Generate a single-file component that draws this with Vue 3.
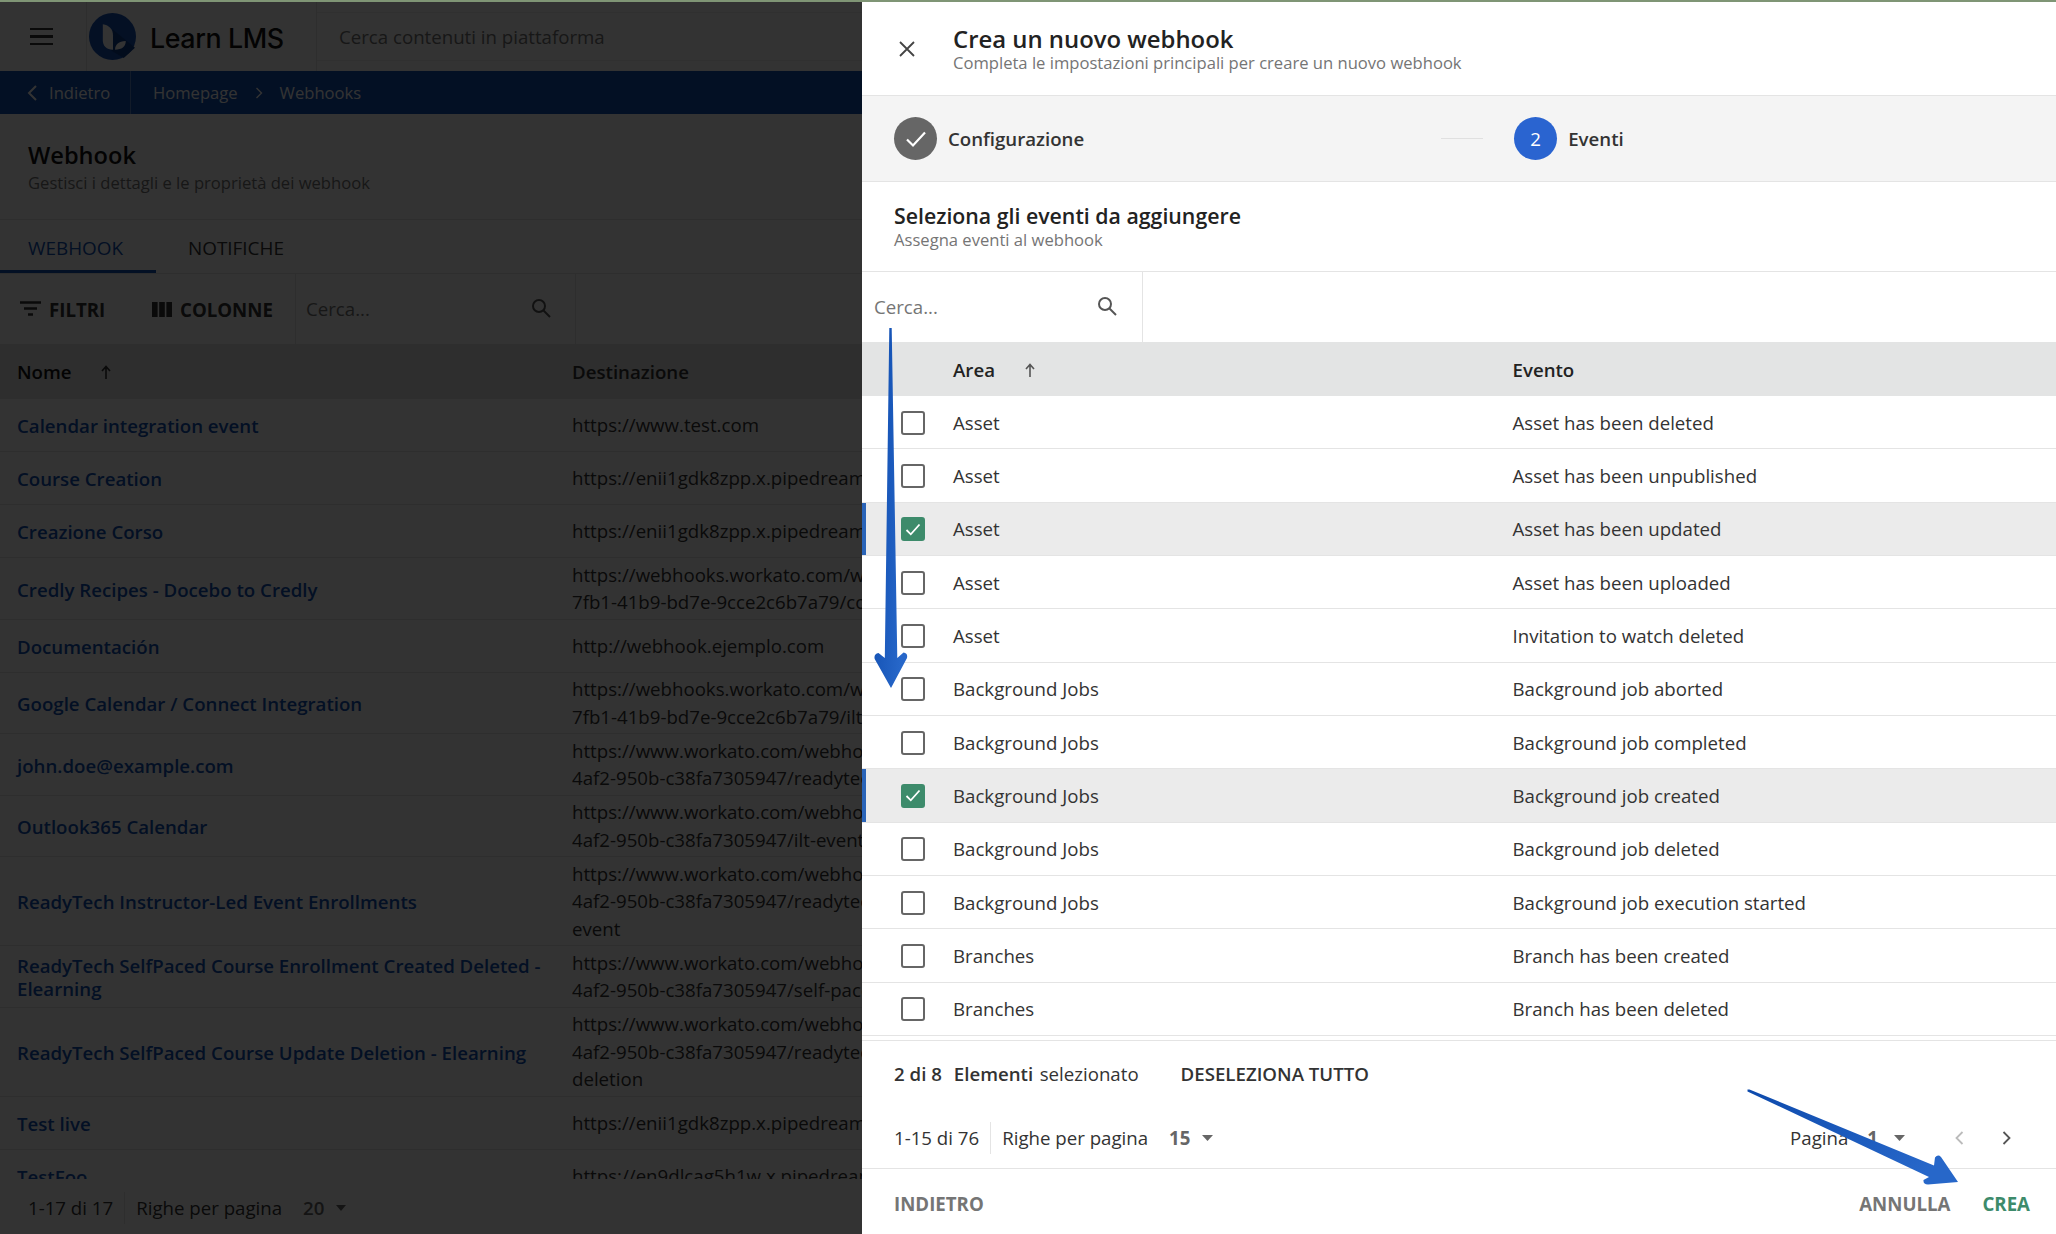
<script setup>
import { ref } from 'vue';

const hooks = [
  { name: ['Calendar integration event'], dest: ['https://www.test.com'] },
  { name: ['Course Creation'], dest: ['https://enii1gdk8zpp.x.pipedream.net'] },
  { name: ['Creazione Corso'], dest: ['https://enii1gdk8zpp.x.pipedream.net'] },
  { name: ['Credly Recipes - Docebo to Credly'], dest: ['https://webhooks.workato.com/webhooks/rest/', '7fb1-41b9-bd7e-9cce2c6b7a79/course'] },
  { name: ['Documentación'], dest: ['http://webhook.ejemplo.com'] },
  { name: ['Google Calendar / Connect Integration'], dest: ['https://webhooks.workato.com/webhooks/rest/', '7fb1-41b9-bd7e-9cce2c6b7a79/ilt-event'] },
  { name: ['john.doe@example.com'], dest: ['https://www.workato.com/webhooks/rest/', '4af2-950b-c38fa7305947/readytech'] },
  { name: ['Outlook365 Calendar'], dest: ['https://www.workato.com/webhooks/rest/', '4af2-950b-c38fa7305947/ilt-event'] },
  { name: ['ReadyTech Instructor-Led Event Enrollments'], dest: ['https://www.workato.com/webhooks/rest/', '4af2-950b-c38fa7305947/readytech', 'event'] },
  { name: ['ReadyTech SelfPaced Course Enrollment Created Deleted -', 'Elearning'], dest: ['https://www.workato.com/webhooks/rest/', '4af2-950b-c38fa7305947/self-paced'] },
  { name: ['ReadyTech SelfPaced Course Update Deletion - Elearning'], dest: ['https://www.workato.com/webhooks/rest/', '4af2-950b-c38fa7305947/readytech', 'deletion'] },
  { name: ['Test live'], dest: ['https://enii1gdk8zpp.x.pipedream.net'] },
  { name: ['TestFoo'], dest: ['https://en9dlcag5h1w.x.pipedream.net'] }
];

const events = ref([
  { area: 'Asset', event: 'Asset has been deleted', on: false },
  { area: 'Asset', event: 'Asset has been unpublished', on: false },
  { area: 'Asset', event: 'Asset has been updated', on: true },
  { area: 'Asset', event: 'Asset has been uploaded', on: false },
  { area: 'Asset', event: 'Invitation to watch deleted', on: false },
  { area: 'Background Jobs', event: 'Background job aborted', on: false },
  { area: 'Background Jobs', event: 'Background job completed', on: false },
  { area: 'Background Jobs', event: 'Background job created', on: true },
  { area: 'Background Jobs', event: 'Background job deleted', on: false },
  { area: 'Background Jobs', event: 'Background job execution started', on: false },
  { area: 'Branches', event: 'Branch has been created', on: false },
  { area: 'Branches', event: 'Branch has been deleted', on: false }
]);
</script>

<template>
  <div class="page">
    <div class="strip"></div>

    <!-- Barra principale -->
    <header class="topbar">
      <div class="burger"><span></span><span></span><span></span></div>
      <div class="brand">
        <svg width="47" height="47" viewBox="0 0 46 46">
          <circle cx="23" cy="23" r="23" fill="#1450b4" />
          <path d="M23 16 L45 34 L34 44 L22 37 Z" fill="#0d3c8c" />
          <path d="M13.5 11 C20 12 23.5 16 23.5 22 L23.5 36 C17 36 13.5 32 13.5 27 Z" fill="#fff" />
          <path d="M25.5 36 C25.5 31 29 28 36 27.5 C36 33 32 36 25.5 36 Z" fill="#fff" />
        </svg>
        <span class="brand-name">Learn LMS</span>
      </div>
      <div class="global-search">Cerca contenuti in piattaforma</div>
    </header>

    <!-- Breadcrumb -->
    <nav class="crumbs">
      <div class="back">
        <svg width="12" height="18" viewBox="0 0 12 18"><path d="M10 2 L3 9 L10 16" fill="none" stroke="#fff" stroke-width="2" /></svg>
        <span>Indietro</span>
      </div>
      <div class="trail">
        <span>Homepage</span>
        <svg width="8" height="12" viewBox="0 0 8 12"><path d="M1.5 1 L6.5 6 L1.5 11" fill="none" stroke="#fff" stroke-width="1.4" /></svg>
        <span>Webhooks</span>
      </div>
    </nav>

    <div class="title-block">
      <h1>Webhook</h1>
      <p>Gestisci i dettagli e le proprietà dei webhook</p>
    </div>

    <div class="tabs">
      <div class="tab active">WEBHOOK</div>
      <div class="tab">NOTIFICHE</div>
    </div>

    <div class="toolbar">
      <div class="tools">
        <svg width="21" height="16" viewBox="0 0 21 16"><path d="M0 1.5H21M4 7.5H17M8 13.5H13" stroke="#333" stroke-width="2.4" /></svg>
        <span class="tool-label filters">FILTRI</span>
        <svg width="20" height="15" viewBox="0 0 20 15"><path d="M0 0H5.6V15H0ZM7.2 0H12.8V15H7.2ZM14.4 0H20V15H14.4Z" fill="#333" /></svg>
        <span class="tool-label">COLONNE</span>
      </div>
      <div class="tool-search">
        <span>Cerca...</span>
        <svg width="22" height="22" viewBox="0 0 22 22"><circle cx="9" cy="9" r="6" fill="none" stroke="#555" stroke-width="2" /><path d="M13.5 13.5 L20 20" stroke="#555" stroke-width="2" /></svg>
      </div>
    </div>

    <div class="hooks-head">
      <div class="col-name">Nome
        <svg class="sort" width="10" height="14" viewBox="0 0 10 14"><path d="M5 14V2M1 6L5 1.5L9 6" fill="none" stroke="#333" stroke-width="1.6" /></svg>
      </div>
      <div class="col-dest">Destinazione</div>
    </div>
    <div class="hooks-body">
      <div v-for="hook in hooks" :key="hook.name[0]" class="hook-row">
        <div class="col-name link"><div v-for="line in hook.name" :key="line">{{ line }}</div></div>
        <div class="col-dest"><div v-for="line in hook.dest" :key="line">{{ line }}</div></div>
      </div>
    </div>
    <div class="hooks-foot">
      <span class="count">1-17 di 17</span>
      <span class="per-page">Righe per pagina</span>
      <span class="size">20</span>
      <svg width="10" height="6" viewBox="0 0 10 6"><path d="M0 0H10L5 6Z" fill="#666" /></svg>
    </div>
  </div>

  <div class="overlay"></div>

  <!-- Pannello laterale -->
  <aside class="drawer">
    <div class="drawer-head">
      <svg class="close" width="18" height="18" viewBox="0 0 18 18"><path d="M2 2L16 16M16 2L2 16" stroke="#444" stroke-width="1.8" /></svg>
      <div>
        <div class="drawer-title">Crea un nuovo webhook</div>
        <div class="drawer-sub">Completa le impostazioni principali per creare un nuovo webhook</div>
      </div>
    </div>

    <div class="stepper">
      <div class="step">
        <div class="dot done">
          <svg width="22" height="18" viewBox="0 0 22 18"><path d="M2 9.5L8 15.5L20 2.5" fill="none" stroke="#fff" stroke-width="2.2" /></svg>
        </div>
        <span>Configurazione</span>
      </div>
      <div class="step-line"></div>
      <div class="step">
        <div class="dot current">2</div>
        <span>Eventi</span>
      </div>
    </div>

    <div class="section">
      <div class="section-title">Seleziona gli eventi da aggiungere</div>
      <div class="section-sub">Assegna eventi al webhook</div>
    </div>

    <div class="event-search">
      <div class="search-box">
        <span>Cerca...</span>
        <svg width="22" height="22" viewBox="0 0 22 22"><circle cx="9" cy="9" r="6" fill="none" stroke="#555" stroke-width="2" /><path d="M13.5 13.5 L20 20" stroke="#555" stroke-width="2" /></svg>
      </div>
    </div>

    <div class="event-head">
      <div class="col-area">Area
        <svg class="sort" width="10" height="14" viewBox="0 0 10 14"><path d="M5 14V2M1 6L5 1.5L9 6" fill="none" stroke="#555" stroke-width="1.6" /></svg>
      </div>
      <div>Evento</div>
    </div>

    <div class="event-list">
      <div v-for="item in events" :key="item.event" class="event-row" :class="{ selected: item.on }">
        <div class="checkbox" :class="{ checked: item.on }">
          <svg v-if="item.on" width="16" height="13" viewBox="0 0 16 13"><path d="M1.5 7L5.8 11.3L14.5 1.5" fill="none" stroke="#fff" stroke-width="1.8" /></svg>
        </div>
        <div class="col-area">{{ item.area }}</div>
        <div>{{ item.event }}</div>
      </div>
    </div>

    <div class="selection">
      <strong>2 di 8</strong>
      <strong class="sel-items">Elementi</strong>
      <span class="sel-word">selezionato</span>
      <span class="deselect">DESELEZIONA TUTTO</span>
    </div>

    <div class="pager">
      <span class="count">1-15 di 76</span>
      <span class="per-page">Righe per pagina</span>
      <span class="size">15</span>
      <svg width="11" height="6" viewBox="0 0 11 6"><path d="M0 0H11L5.5 6Z" fill="#666" /></svg>
      <div class="pager-right">
        <span>Pagina</span>
        <span class="size page-no">1</span>
        <svg width="11" height="6" viewBox="0 0 11 6"><path d="M0 0H11L5.5 6Z" fill="#666" /></svg>
        <svg class="prev" width="9" height="14" viewBox="0 0 9 14"><path d="M7.5 1L1.5 7L7.5 13" fill="none" stroke="#bbb" stroke-width="1.8" /></svg>
        <svg class="next" width="9" height="14" viewBox="0 0 9 14"><path d="M1.5 1L7.5 7L1.5 13" fill="none" stroke="#555" stroke-width="1.8" /></svg>
      </div>
    </div>

    <div class="drawer-foot">
      <span class="btn">INDIETRO</span>
      <span class="btn cancel">ANNULLA</span>
      <span class="btn create">CREA</span>
    </div>
  </aside>

  <!-- Frecce di annotazione -->
  <svg class="arrows" width="2056" height="1234" viewBox="0 0 2056 1234">
    <defs>
      <linearGradient id="blueArrow" x1="0" y1="0" x2="1" y2="0.6">
        <stop offset="0" stop-color="#0d4aac" />
        <stop offset="1" stop-color="#2767c9" />
      </linearGradient>
    </defs>
    <path d="M889.3 328 L891.7 328 L897.3 658 L903.5 652.5 Q908 653 907 658 L891 688 L874.7 659 Q873.5 654 878.5 653 L884.8 658 Z" fill="url(#blueArrow)" />
    <path d="M1747.5 1089.5 L1749.5 1089.5 L1934 1165.5 L1935 1157.5 Q1938 1154 1941 1157 L1958 1182 L1928 1184.5 Q1923 1184.5 1923.5 1180 L1929 1177 L1747.5 1091.5 Z" fill="url(#blueArrow)" />
  </svg>
</template>

<style scoped>
.page {
  width: 2056px;
  height: 1234px;
  display: flex;
  flex-direction: column;
  overflow: hidden;
  background: #fff;
  color: #333;
  font-family: "Open Sans", sans-serif;
  font-size: 18.67px;
}

.strip {
  height: 2px;
  background: #7f9575;
  position: relative;
  z-index: 10;
}

.topbar {
  height: 69px;
  display: flex;
  align-items: center;
}

.burger {
  width: 86px;
  padding-left: 30px;
  box-sizing: border-box;
  display: flex;
  flex-direction: column;
  gap: 5px;
}

.burger span {
  width: 23px;
  height: 2.5px;
  background: #333;
}

.brand {
  width: 231px;
  height: 69px;
  box-sizing: border-box;
  display: flex;
  align-items: center;
  gap: 14px;
  padding-left: 2px;
  border-left: 1px solid #e4e4e4;
  border-right: 1px solid #e4e4e4;
}

.brand-name {
  font-family: Inter, sans-serif;
  font-size: 26.8px;
  font-weight: 500;
  color: #111;
  letter-spacing: -0.4px;
  padding-top: 2px;
}

.global-search {
  flex: 1;
  height: 47px;
  line-height: 47px;
  padding-left: 22px;
  color: #757575;
  border-top: 1px solid #eee;
  border-bottom: 1px solid #eee;
}

.crumbs {
  height: 43px;
  display: flex;
  align-items: stretch;
  background: #0f4fb4;
  color: #fff;
  font-size: 16.6px;
}

.back {
  width: 131px;
  box-sizing: border-box;
  padding-left: 26px;
  display: flex;
  align-items: center;
  gap: 11px;
  border-right: 1px solid #5c86cc;
}

.trail {
  display: flex;
  align-items: center;
  gap: 17px;
  padding-left: 22px;
}

.title-block {
  height: 106px;
  box-sizing: border-box;
  padding: 25px 28px 0;
  border-bottom: 1px solid #e4e4e4;
}

.title-block h1 {
  margin: 0;
  font-size: 23.6px;
  font-weight: 600;
  line-height: 32px;
  color: #111;
}

.title-block p {
  margin: 0;
  font-size: 16.6px;
  line-height: 24px;
  color: #757575;
}

.tabs {
  height: 54px;
  box-sizing: border-box;
  display: flex;
  border-bottom: 1px solid #e4e4e4;
}

.tab {
  width: 156px;
  box-sizing: border-box;
  padding: 1px 0 0 28px;
  line-height: 54px;
  font-size: 18.9px;
  margin-right: 4px;
}

.tab.active {
  color: #0f4fb4;
  border-bottom: 3px solid #0f4fb4;
}

.toolbar {
  height: 70px;
  display: flex;
  align-items: stretch;
}

.tools {
  width: 296px;
  box-sizing: border-box;
  padding-left: 20px;
  display: flex;
  align-items: center;
  border-right: 1px solid #e4e4e4;
}

.tool-label {
  margin-left: 8px;
  font-weight: 700;
}

.tool-label.filters {
  width: 103px;
}

.tool-search {
  width: 280px;
  box-sizing: border-box;
  padding: 0 23px 2px 10px;
  display: flex;
  align-items: center;
  justify-content: space-between;
  color: #757575;
  border-right: 1px solid #e4e4e4;
}

.hooks-head {
  height: 55px;
  display: flex;
  align-items: center;
  background: #e3e4e4;
  font-weight: 600;
  padding-left: 17px;
}

.hooks-head .col-dest {
  color: #333;
}

.col-name {
  width: 555px;
  flex-shrink: 0;
}

.col-dest {
  width: 290px;
  flex-shrink: 0;
  overflow: hidden;
}

.hooks-head .col-name {
  color: #111;
}

.sort {
  margin-left: 25px;
}

.hooks-body {
  flex: 1;
  overflow: hidden;
}

.hook-row {
  min-height: 53px;
  box-sizing: border-box;
  padding: 2.75px 0 2.75px 17px;
  display: flex;
  align-items: center;
  line-height: 27.5px;
  border-bottom: 1px solid #e4e4e4;
  white-space: nowrap;
}

.link {
  color: #0f4fb4;
  font-weight: 600;
  line-height: 23px;
  padding-top: 1.5px;
}

.hooks-foot {
  height: 55px;
  flex-shrink: 0;
  box-sizing: border-box;
  padding: 2px 0 0 28px;
  display: flex;
  align-items: center;
}

.count {
  padding-right: 11px;
  border-right: 1px solid #e4e4e4;
  line-height: 32px;
}

.per-page {
  margin-left: 11px;
}

.size {
  margin: 0 12px 0 21px;
  font-weight: 600;
  color: #666;
}

.overlay {
  position: fixed;
  inset: 0;
  background: rgba(0, 0, 0, 0.8);
}

.drawer {
  position: fixed;
  top: 2px;
  right: 0;
  bottom: 0;
  width: 1194px;
  display: flex;
  flex-direction: column;
  background: #fff;
  color: #333;
  font-family: "Open Sans", sans-serif;
  font-size: 18.67px;
}

.drawer-head {
  height: 94px;
  flex-shrink: 0;
  box-sizing: border-box;
  display: flex;
  align-items: center;
  border-bottom: 1.5px solid #e4e4e4;
}

.close {
  margin: 0 37px 0 36px;
}

.drawer-title {
  font-size: 23.9px;
  font-weight: 600;
  line-height: 27px;
  color: #222;
}

.drawer-sub {
  font-size: 16.6px;
  line-height: 21px;
  color: #757575;
}

.stepper {
  height: 86px;
  flex-shrink: 0;
  box-sizing: border-box;
  display: flex;
  align-items: center;
  padding-left: 32px;
  background: #f4f4f4;
  border-bottom: 1.5px solid #e4e4e4;
  font-weight: 600;
}

.step {
  display: flex;
  align-items: center;
  gap: 11px;
}

.dot {
  width: 43px;
  height: 43px;
  border-radius: 50%;
  display: flex;
  align-items: center;
  justify-content: center;
  color: #fff;
  font-weight: 400;
}

.dot.done {
  background: #666;
}

.dot.current {
  background: #2a64d0;
}

.step-line {
  width: 42px;
  height: 1px;
  background: #e0e0e0;
  margin: 0 31px 0 357px;
}

.section {
  height: 90px;
  flex-shrink: 0;
  box-sizing: border-box;
  padding: 20px 0 0 32px;
  border-bottom: 1.5px solid #e4e4e4;
}

.section-title {
  font-size: 21.3px;
  font-weight: 600;
  line-height: 28px;
  color: #222;
}

.section-sub {
  font-size: 16.6px;
  line-height: 20px;
  color: #757575;
}

.event-search {
  height: 70px;
  flex-shrink: 0;
}

.search-box {
  width: 281px;
  height: 100%;
  box-sizing: border-box;
  padding: 0 24px 2px 12px;
  display: flex;
  align-items: center;
  justify-content: space-between;
  color: #757575;
  border-right: 1.5px solid #e4e4e4;
}

.event-head {
  height: 54px;
  flex-shrink: 0;
  display: flex;
  align-items: center;
  background: #e3e4e4;
  font-weight: 600;
  padding-left: 91px;
  color: #222;
}

.col-area {
  width: 559.5px;
  flex-shrink: 0;
}

.event-list {
  height: 645px;
  flex-shrink: 0;
  overflow: hidden;
  border-bottom: 1.5px solid #e4e4e4;
  box-sizing: border-box;
}

.event-row {
  height: 53.33px;
  box-sizing: border-box;
  display: flex;
  align-items: center;
  border-bottom: 1.5px solid #e4e4e4;
  padding-left: 39px;
  color: #333;
}

.event-row.selected {
  background: #ebebeb;
  box-shadow: inset 4px 0 0 #2a64b8;
}

.checkbox {
  width: 24px;
  height: 24px;
  box-sizing: border-box;
  flex-shrink: 0;
  margin: 1px 28px 0 0;
  border: 2.4px solid #666;
  border-radius: 3px;
  display: flex;
  align-items: center;
  justify-content: center;
}

.checkbox.checked {
  background: #3d8b6b;
  border-color: #3d8b6b;
}

.selection {
  height: 64px;
  flex-shrink: 0;
  display: flex;
  align-items: center;
  padding-left: 32px;
}

.selection strong {
  font-weight: 600;
}

.sel-items {
  margin-left: 12px;
}

.sel-word {
  margin-left: 6.5px;
}

.deselect {
  margin-left: 42px;
  font-weight: 600;
}

.pager {
  height: 64px;
  flex-shrink: 0;
  box-sizing: border-box;
  padding: 2px 0 0 32px;
  display: flex;
  align-items: center;
  border-bottom: 1.5px solid #e4e4e4;
}

.pager .size {
  font-weight: 700;
}

.pager-right {
  margin-left: auto;
  display: flex;
  align-items: center;
}

.pager .page-no {
  margin: 0 16px 0 19px;
}

.prev {
  margin: 0 0 0 50px;
}

.next {
  margin: 0 45px 0 38px;
}

.drawer-foot {
  flex: 1;
  box-sizing: border-box;
  display: flex;
  align-items: center;
  padding: 3px 26px 0 32px;
}

.btn {
  font-weight: 700;
  color: #757575;
}

.cancel {
  margin-left: auto;
}

.create {
  margin-left: 32px;
  color: #3d8b6b;
}

.arrows {
  position: fixed;
  inset: 0;
  pointer-events: none;
}
</style>

<style>
body {
  margin: 0;
  overflow: hidden;
}
</style>
